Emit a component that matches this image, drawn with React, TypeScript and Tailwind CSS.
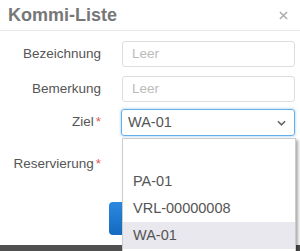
const options = ['', 'PA-01', 'VRL-00000008', 'WA-01'];

const Label = ({ text, required }: { text: string; required?: boolean }) => (
  <div className="w-[101px] shrink-0 text-right text-[13.5px] text-[#555]">
    {text}
    {required && <span className="ml-[2px] text-[#e05a5a]">*</span>}
  </div>
);

export default function App() {
  const selected = 'WA-01';

  return (
    <div
      className="relative w-[300px] h-[251px] overflow-hidden bg-white flex flex-col"
      style={{ fontFamily: '"Liberation Sans", Arial, sans-serif' }}
    >
      {/* header */}
      <div className="h-[31px] shrink-0 flex items-center justify-between pl-[8px] pr-[12px] border-b border-[#e8e8e8]">
        <h1 className="text-[18px] font-bold text-[#777] leading-none">Kommi-Liste</h1>
        <svg className="w-[9px] h-[9px]" viewBox="0 0 10 10" stroke="#aaa" strokeWidth={1.6}>
          <path d="M1 1l8 8M9 1l-8 8" />
        </svg>
      </div>

      {/* form */}
      <div className="flex flex-col pt-[10px] pr-[5px]">
        <div className="flex items-center gap-[21px] h-[26px]">
          <Label text="Bezeichnung" />
          <div className="flex-1 h-full border border-[#ddd] rounded-[3px] pl-[9px] flex items-center text-[13.5px] text-[#bbb]">
            Leer
          </div>
        </div>
        <div className="flex items-center gap-[21px] h-[26px] mt-[9px]">
          <Label text="Bemerkung" />
          <div className="flex-1 h-full border border-[#ddd] rounded-[3px] pl-[9px] flex items-center text-[13.5px] text-[#bbb]">
            Leer
          </div>
        </div>
        <div className="flex items-center gap-[20px] h-[27px] mt-[7px]">
          <Label text="Ziel" required />
          <div className="flex-1 h-full border border-[#66afe9] rounded-[3px] shadow-[0_0_3px_rgba(102,175,233,0.7)] pl-[6px] pr-[8px] flex items-center justify-between text-[14.5px] text-[#555]">
            <span>{selected}</span>
            <svg className="w-[9px] h-[6px]" viewBox="0 0 10 6" fill="none" stroke="#666" strokeWidth={1.8}>
              <path d="M1 1l4 4 4-4" />
            </svg>
          </div>
        </div>
        <div className="flex items-center gap-[21px] h-[26px] mt-[15px]">
          <Label text="Reservierung" required />
          <div className="flex-1 h-full" />
        </div>
      </div>

      {/* footer, button mostly hidden behind the open list */}
      <div className="mt-[25px] pl-[109px]">
        <button
          aria-label="Speichern"
          className="h-[33px] w-[90px] rounded-[4px] bg-gradient-to-b from-[#2a8ae0] to-[#1569c0]"
        />
      </div>
      <div className="mt-auto h-[6px] bg-[#505050]" />

      {/* open dropdown */}
      <ul className="absolute left-[122px] top-[138px] w-[174px] h-[120px] bg-white border border-[#ccc] shadow-[2px_2px_3px_rgba(0,0,0,0.35)] pt-[2px]">
        {options.map((opt) => (
          <li
            key={opt || 'empty'}
            className={`h-[27px] flex items-center pl-[10px] text-[14.5px] text-[#555] ${opt === selected ? 'bg-[#e8e8ee]' : ''}`}
          >
            {opt}
          </li>
        ))}
      </ul>
    </div>
  );
}
